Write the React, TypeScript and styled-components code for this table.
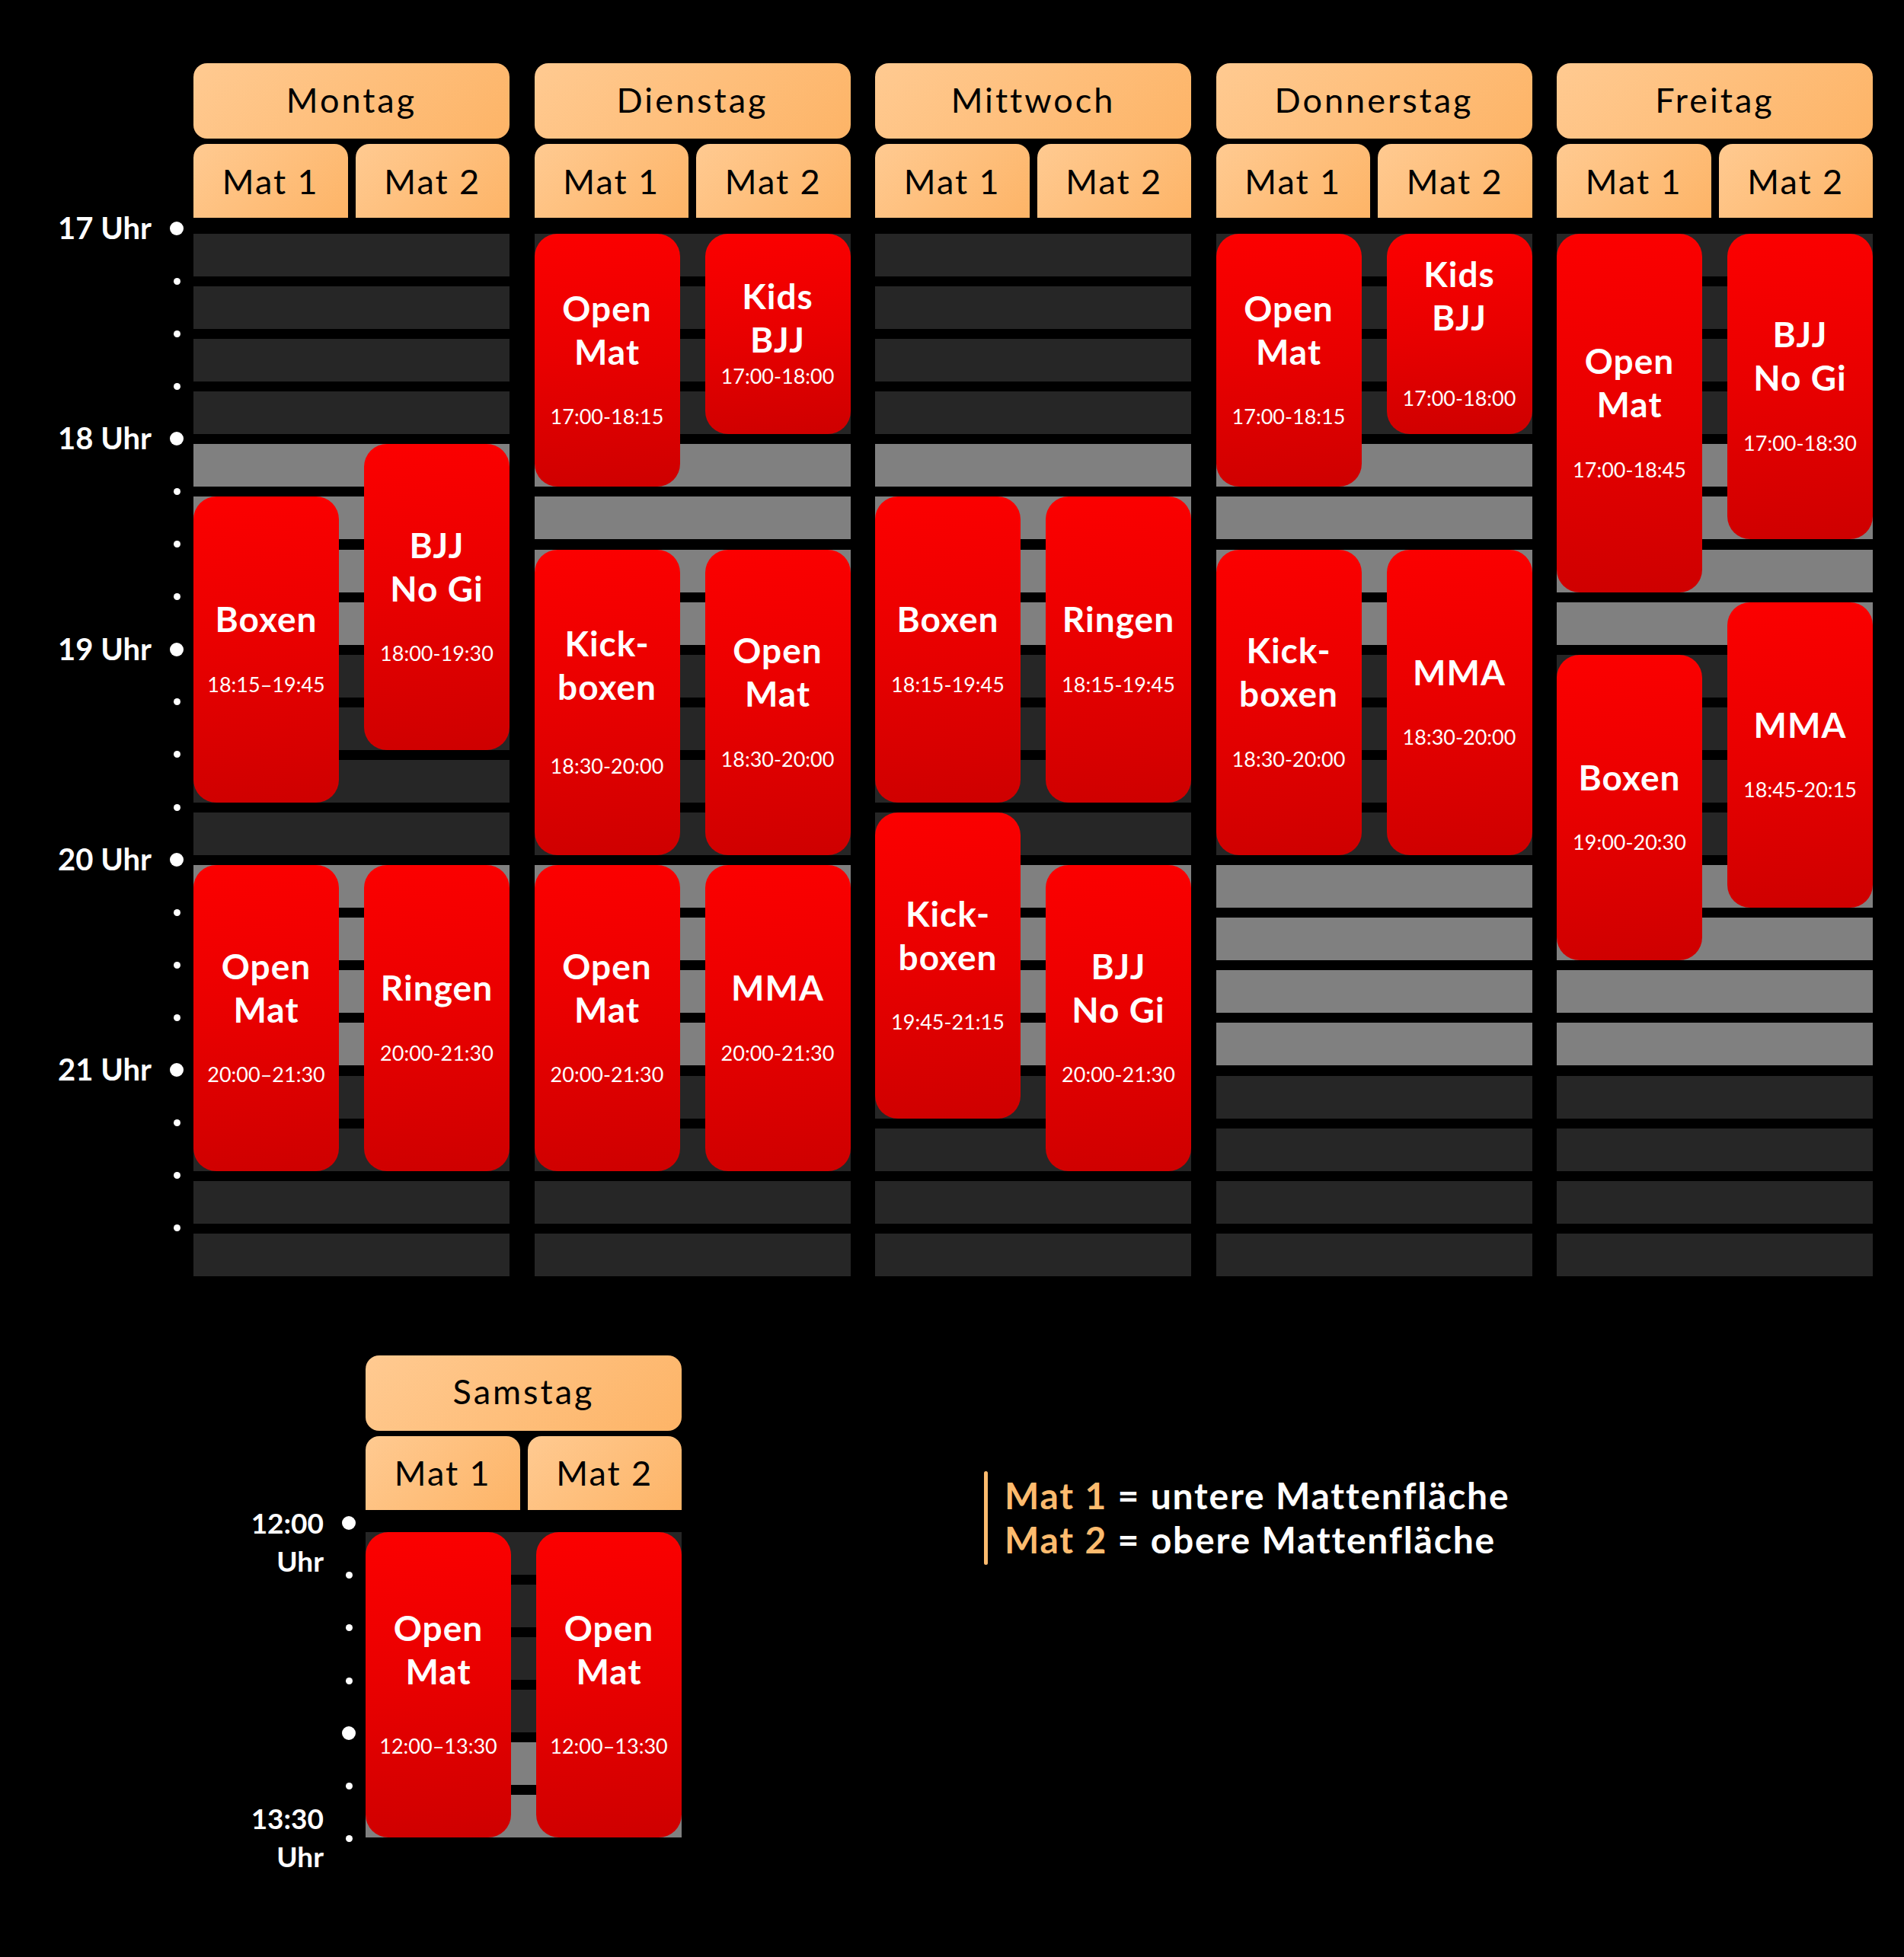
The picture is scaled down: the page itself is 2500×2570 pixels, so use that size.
import { FC } from 'react';
import styled, { createGlobalStyle } from 'styled-components';

const PITCH = 69.1;
const ROW_H = 56;
const ROW_GAP = PITCH - ROW_H;

interface Session {
  mat: 1 | 2;
  title: string[];
  time: string;
  gap?: number;
}

interface DayPlan {
  name: string;
  sessions: Session[];
}

interface Tick {
  label?: string[];
  big?: boolean;
  anchorTop?: boolean;
}

const week: DayPlan[] = [
  {
    name: 'Montag',
    sessions: [
      { mat: 1, title: ['Boxen'], time: '18:15–19:45' },
      { mat: 2, title: ['BJJ', 'No Gi'], time: '18:00-19:30' },
      { mat: 1, title: ['Open', 'Mat'], time: '20:00–21:30' },
      { mat: 2, title: ['Ringen'], time: '20:00-21:30' }
    ]
  },
  {
    name: 'Dienstag',
    sessions: [
      { mat: 1, title: ['Open', 'Mat'], time: '17:00-18:15' },
      { mat: 2, title: ['Kids', 'BJJ'], time: '17:00-18:00', gap: 5.5 },
      { mat: 1, title: ['Kick-', 'boxen'], time: '18:30-20:00', gap: 61.5 },
      { mat: 2, title: ['Open', 'Mat'], time: '18:30-20:00' },
      { mat: 1, title: ['Open', 'Mat'], time: '20:00-21:30' },
      { mat: 2, title: ['MMA'], time: '20:00-21:30' }
    ]
  },
  {
    name: 'Mittwoch',
    sessions: [
      { mat: 1, title: ['Boxen'], time: '18:15-19:45' },
      { mat: 2, title: ['Ringen'], time: '18:15-19:45' },
      { mat: 1, title: ['Kick-', 'boxen'], time: '19:45-21:15' },
      { mat: 2, title: ['BJJ', 'No Gi'], time: '20:00-21:30' }
    ]
  },
  {
    name: 'Donnerstag',
    sessions: [
      { mat: 1, title: ['Open', 'Mat'], time: '17:00-18:15' },
      { mat: 2, title: ['Kids', 'BJJ'], time: '17:00-18:00', gap: 63.5 },
      { mat: 1, title: ['Kick-', 'boxen'], time: '18:30-20:00' },
      { mat: 2, title: ['MMA'], time: '18:30-20:00' }
    ]
  },
  {
    name: 'Freitag',
    sessions: [
      { mat: 1, title: ['Open', 'Mat'], time: '17:00-18:45' },
      { mat: 2, title: ['BJJ', 'No Gi'], time: '17:00-18:30' },
      { mat: 1, title: ['Boxen'], time: '19:00-20:30' },
      { mat: 2, title: ['MMA'], time: '18:45-20:15' }
    ]
  }
];

const saturday: DayPlan = {
  name: 'Samstag',
  sessions: [
    { mat: 1, title: ['Open', 'Mat'], time: '12:00–13:30', gap: 54.5 },
    { mat: 2, title: ['Open', 'Mat'], time: '12:00–13:30', gap: 54.5 }
  ]
};

const weekTicks: Tick[] = Array.from({ length: 20 }, (_, i) => ({
  label: i % 4 === 0 ? [`${17 + i / 4} Uhr`] : undefined,
  big: i % 4 === 0
}));

const saturdayTicks: Tick[] = [
  { label: ['12:00', 'Uhr'], big: true, anchorTop: true },
  {},
  {},
  {},
  { big: true },
  {},
  { label: ['13:30', 'Uhr'] }
];

const toQuarter = (t: string, baseHour: number) => {
  const [h, m] = t.trim().split(':').map(Number);
  return (h - baseHour) * 4 + Math.round(m / 15);
};

const GlobalStyle = createGlobalStyle`
  html, body {
    margin: 0;
    padding: 0;
    background: #000000;
  }
`;

interface DayProps {
  plan: DayPlan;
  baseHour: number;
  rows: number;
  bodyGap: number;
}

const Day: FC<DayProps> = ({ plan, baseHour, rows, bodyGap }) => (
  <DayColumn>
    <DayHeader>{plan.name}</DayHeader>
    <MatRow>
      <MatHeader>Mat 1</MatHeader>
      <MatHeader>Mat 2</MatHeader>
    </MatRow>
    <Board $rows={rows} $gap={bodyGap}>
      {Array.from({ length: rows }, (_, i) => (
        <Stripe key={i} $row={i + 1} $light={Math.floor(i / 4) % 2 === 1} />
      ))}
      {plan.sessions.map((s, i) => {
        const [from, to] = s.time.split(/[-–]/);
        const start = toQuarter(from, baseHour);
        const span = toQuarter(to, baseHour) - start;
        return (
          <Card key={i} $mat={s.mat} $row={start + 1} $span={span}>
            <CardTitle>
              {s.title.map((line) => (
                <div key={line}>{line}</div>
              ))}
            </CardTitle>
            <CardTime $gap={s.gap ?? 42.5}>{s.time}</CardTime>
          </Card>
        );
      })}
    </Board>
  </DayColumn>
);

interface TimeAxisProps {
  ticks: Tick[];
  offset: number;
  indent?: number;
}

const TimeAxis: FC<TimeAxisProps> = ({ ticks, offset, indent = 0 }) => (
  <Axis $offset={offset} $indent={indent}>
    {ticks.map((t, i) => (
      <TickRow key={i}>
        {t.label && (
          <TickLabel $multi={t.label.length > 1} $anchorTop={!!t.anchorTop}>
            {t.label.map((l) => (
              <div key={l}>{l}</div>
            ))}
          </TickLabel>
        )}
        <DotSlot>
          <Dot $big={!!t.big} />
        </DotSlot>
      </TickRow>
    ))}
  </Axis>
);

const App: FC = () => (
  <Page>
    <GlobalStyle />
    <Row>
      <TimeAxis ticks={weekTicks} offset={182.45} />
      <Days>
        {week.map((d) => (
          <Day key={d.name} plan={d} baseHour={17} rows={20} bodyGap={21} />
        ))}
      </Days>
    </Row>
    <BottomRow>
      <TimeAxis ticks={saturdayTicks} offset={185.45} indent={226} />
      <Day plan={saturday} baseHour={12} rows={6} bodyGap={29} />
      <Legend>
        <LegendBar />
        <LegendText>
          <div><Accent>Mat 1</Accent> = untere Mattenfläche</div>
          <div><Accent>Mat 2</Accent> = obere Mattenfläche</div>
        </LegendText>
      </Legend>
    </BottomRow>
  </Page>
);

const Page = styled.div`
  width: 2500px;
  min-height: 2570px;
  box-sizing: border-box;
  padding-top: 83px;
  display: flex;
  flex-direction: column;
  background: #000000;
  font-family: 'Lato', 'Noto Sans', sans-serif;
`;

const Row = styled.div`
  display: flex;
  align-items: flex-start;
`;

const BottomRow = styled.div`
  display: flex;
  align-items: flex-start;
  margin-top: 104px;
`;

const Days = styled.div`
  display: flex;
  gap: 32.5px;
`;

const Axis = styled.div<{ $offset: number; $indent: number }>`
  width: 254px;
  flex-shrink: 0;
  box-sizing: border-box;
  margin-left: ${(p) => p.$indent}px;
  padding-top: ${(p) => p.$offset}px;
  padding-right: 13px;
  display: flex;
  flex-direction: column;
`;

const TickRow = styled.div`
  height: ${PITCH}px;
  display: flex;
  align-items: center;
  justify-content: flex-end;
`;

const TickLabel = styled.div<{ $multi: boolean; $anchorTop: boolean }>`
  margin-right: 24px;
  text-align: right;
  font-weight: 700;
  font-size: ${(p) => (p.$multi ? 37 : 40)}px;
  line-height: ${(p) => (p.$multi ? 50 : 40)}px;
  color: #FFFFFF;
  white-space: nowrap;
  transform: translateY(${(p) => (p.$anchorTop ? 25 : -1)}px);
`;

const DotSlot = styled.div`
  width: 18px;
  display: flex;
  align-items: center;
  justify-content: center;
`;

const Dot = styled.div<{ $big: boolean }>`
  width: ${(p) => (p.$big ? 18 : 9)}px;
  height: ${(p) => (p.$big ? 18 : 9)}px;
  border-radius: 50%;
  background: #FFFFFF;
`;

const DayColumn = styled.div`
  width: 415px;
  flex-shrink: 0;
  display: flex;
  flex-direction: column;
`;

const DayHeader = styled.div`
  height: 99px;
  box-sizing: border-box;
  padding-bottom: 4px;
  display: flex;
  align-items: center;
  justify-content: center;
  border-radius: 18px;
  background: linear-gradient(135deg, #FFCA91 0%, #FDB467 100%);
  font-size: 45px;
  letter-spacing: 3px;
  color: #000000;
`;

const MatRow = styled.div`
  display: flex;
  gap: 10px;
  margin-top: 7px;
`;

const MatHeader = styled.div`
  flex: 1;
  height: 97px;
  display: flex;
  align-items: center;
  justify-content: center;
  border-radius: 18px 18px 0 0;
  background: linear-gradient(135deg, #FFCA91 0%, #FDB467 100%);
  font-size: 45px;
  letter-spacing: 2px;
  color: #000000;
`;

const Board = styled.div<{ $rows: number; $gap: number }>`
  display: grid;
  grid-template-columns: 1fr 1fr;
  grid-template-rows: repeat(${(p) => p.$rows}, ${ROW_H}px);
  column-gap: 33px;
  row-gap: ${ROW_GAP}px;
  margin-top: ${(p) => p.$gap}px;
`;

const Stripe = styled.div<{ $row: number; $light: boolean }>`
  grid-column: 1 / -1;
  grid-row: ${(p) => p.$row};
  background: ${(p) => (p.$light ? '#808080' : '#262626')};
`;

const Card = styled.div<{ $mat: number; $row: number; $span: number }>`
  grid-column: ${(p) => p.$mat};
  grid-row: ${(p) => p.$row} / span ${(p) => p.$span};
  z-index: 1;
  box-sizing: border-box;
  padding-bottom: 8px;
  display: flex;
  flex-direction: column;
  align-items: center;
  justify-content: center;
  border-radius: 30px;
  background: linear-gradient(175deg, #FC0000 0%, #E80000 50%, #CE0000 100%);
  color: #FFFFFF;
  text-align: center;
`;

const CardTitle = styled.div`
  font-weight: 700;
  font-size: 46px;
  line-height: 57px;
  letter-spacing: 1px;
`;

const CardTime = styled.div<{ $gap: number }>`
  margin-top: ${(p) => p.$gap}px;
  font-size: 27px;
  line-height: 30px;
  white-space: nowrap;
`;

const Legend = styled.div`
  display: flex;
  align-items: center;
  gap: 22px;
  margin-left: 397px;
  margin-top: 152px;
`;

const LegendBar = styled.div`
  width: 5px;
  height: 123px;
  border-radius: 3px;
  background: #FDBB6E;
`;

const LegendText = styled.div`
  font-weight: 700;
  font-size: 48px;
  line-height: 58px;
  letter-spacing: 1.8px;
  color: #FFFFFF;
  white-space: nowrap;
`;

const Accent = styled.span`
  color: #FDBB6E;
`;

export default App;
